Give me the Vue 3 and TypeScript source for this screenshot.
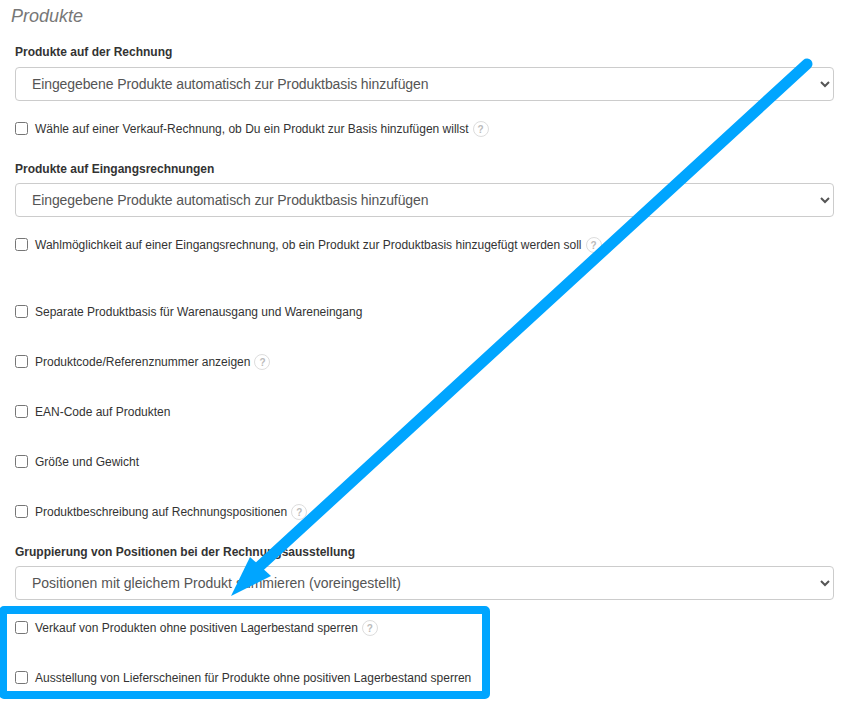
<template>
  <div class="page">
    <h3 class="title">Produkte</h3>

    <label class="field-label first">Produkte auf der Rechnung</label>
    <select class="field-select tight">
      <option>{{ autoAdd }}</option>
    </select>
    <div class="check-row after-select">
      <input type="checkbox" />
      <span>Wähle auf einer Verkauf-Rechnung, ob Du ein Produkt zur Basis hinzufügen willst</span>
      <i class="help">?</i>
    </div>

    <label class="field-label">Produkte auf Eingangsrechnungen</label>
    <select class="field-select tight">
      <option>{{ autoAdd }}</option>
    </select>
    <div class="check-row after-select spaced">
      <input type="checkbox" />
      <span>Wahlmöglichkeit auf einer Eingangsrechnung, ob ein Produkt zur Produktbasis hinzugefügt werden soll</span>
      <i class="help">?</i>
    </div>

    <div class="check-list">
      <div v-for="row in rows" :key="row.text" class="check-row">
        <input type="checkbox" />
        <span>{{ row.text }}</span>
        <i v-if="row.help" class="help">?</i>
      </div>
    </div>

    <label class="field-label grouped">Gruppierung von Positionen bei der Rechnungsausstellung</label>
    <select class="field-select">
      <option>Positionen mit gleichem Produkt summieren (voreingestellt)</option>
    </select>
    <div class="check-row after-select last">
      <input type="checkbox" />
      <span>Verkauf von Produkten ohne positiven Lagerbestand sperren</span>
      <i class="help">?</i>
    </div>
    <div class="check-row">
      <input type="checkbox" />
      <span>Ausstellung von Lieferscheinen für Produkte ohne positiven Lagerbestand sperren</span>
    </div>

    <!-- annotation drawn over the screenshot -->
    <svg class="markup" width="852" height="704" viewBox="0 0 852 704">
      <line x1="807" y1="64" x2="260" y2="566" stroke="#00a5ff" stroke-width="11" stroke-linecap="round" />
      <polygon points="231,596 250,557 271,576" fill="#00a5ff" />
      <rect x="3" y="610" width="483" height="85" rx="1" fill="none" stroke="#00a5ff" stroke-width="8" />
    </svg>
  </div>
</template>

<script setup lang="ts">
const autoAdd = 'Eingegebene Produkte automatisch zur Produktbasis hinzufügen'

const rows: { text: string; help?: boolean }[] = [
  { text: 'Separate Produktbasis für Warenausgang und Wareneingang' },
  { text: 'Produktcode/Referenznummer anzeigen', help: true },
  { text: 'EAN-Code auf Produkten' },
  { text: 'Größe und Gewicht' },
  { text: 'Produktbeschreibung auf Rechnungspositionen', help: true },
]
</script>

<style>
html,
body {
  background: #fff;
  overflow: hidden;
}
</style>

<style scoped>
.page {
  position: relative;
  width: 852px;
  height: 704px;
  box-sizing: border-box;
  padding: 0 18px 0 15px;
  font-family: "Liberation Sans", Arial, sans-serif;
  font-size: 12px;
  color: #333;
  overflow: hidden;
}

.title {
  margin: 0 0 0 -4px;
  padding-top: 6px;
  height: 44px;
  box-sizing: border-box;
  font-size: 18px;
  line-height: 20px;
  font-weight: 400;
  font-style: italic;
  color: #777;
}

.field-label {
  display: block;
  height: 16px;
  line-height: 16px;
  margin-bottom: 6px;
  font-weight: 700;
}

.field-label.first {
  margin-bottom: 7px;
}

.field-label.grouped {
  margin-top: 22px;
}

.field-select {
  display: block;
  width: 100%;
  height: 34px;
  padding: 0 12px;
  background: #fff;
  border: 1px solid #ccc;
  border-radius: 4px;
  font-family: inherit;
  font-size: 14px;
  color: #555;
}

.field-select.tight {
  letter-spacing: -0.1px;
}

.check-list {
  display: flex;
  flex-direction: column;
  gap: 30px;
}

.check-row {
  display: flex;
  align-items: center;
  height: 20px;
}

.check-row input {
  width: 13px;
  height: 13px;
  margin: -1px 7px 0 0;
}

.check-row.after-select {
  margin-top: 18px;
  margin-bottom: 22px;
}

.check-row.spaced {
  margin-bottom: 47px;
}

.check-row.last {
  margin-bottom: 30px;
}

.help {
  display: inline-flex;
  align-items: center;
  justify-content: center;
  width: 16px;
  height: 16px;
  margin-left: 4px;
  box-sizing: border-box;
  border: 1px solid #ddd;
  border-radius: 50%;
  font-size: 10px;
  font-style: normal;
  font-weight: 700;
  color: #bbb;
}

.markup {
  position: absolute;
  left: 0;
  top: 0;
  pointer-events: none;
}
</style>
